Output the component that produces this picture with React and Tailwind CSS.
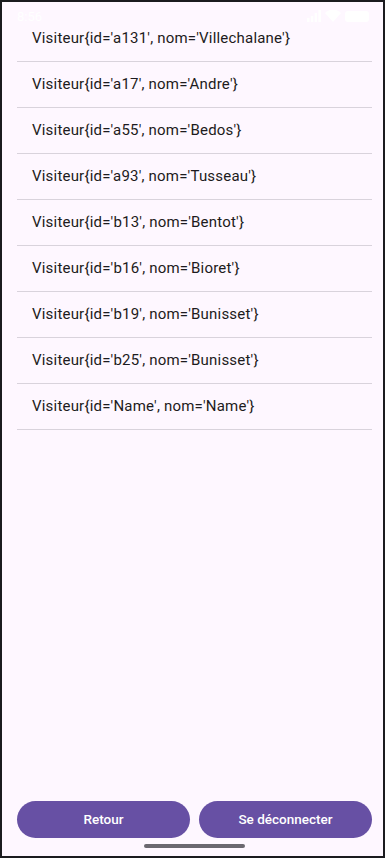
import React from "react";

const items = [
  ["a131", "Villechalane"],
  ["a17", "Andre"],
  ["a55", "Bedos"],
  ["a93", "Tusseau"],
  ["b13", "Bentot"],
  ["b16", "Bioret"],
  ["b19", "Bunisset"],
  ["b25", "Bunisset"],
  ["Name", "Name"],
];

export default function App() {
  return (
    <div
      className="w-[385px] h-[858px] bg-[#1b1b1f] pt-[2px] pb-[2px] pl-[2px] pr-[2px] overflow-hidden"
      style={{ fontFamily: "Roboto, 'Noto Sans', sans-serif" }}
    >
      <div className="relative w-full h-full bg-[#fef7ff] flex flex-col">
        {/* status bar */}
        <div className="absolute top-0 left-0 right-0 h-[28px] flex items-center justify-between pl-[15px] pr-[14px] text-white">
          <span className="text-[13px] leading-none">8:56</span>
          <div className="flex items-center gap-[4px]">
            <svg width="14" height="12" viewBox="0 0 14 12" fill="white">
              <rect x="0" y="8" width="2.5" height="4" />
              <rect x="3.8" y="6" width="2.5" height="6" />
              <rect x="7.6" y="3" width="2.5" height="9" />
              <rect x="11.4" y="0" width="2.5" height="12" />
            </svg>
            <svg width="16" height="12" viewBox="0 0 16 12" fill="white">
              <path d="M8 12 L0 3 A11 11 0 0 1 16 3 Z" />
            </svg>
            <div className="w-[24px] h-[11px] rounded-[3px] bg-white" />
          </div>
        </div>

        <div className="flex-1 pt-[14px] pl-[15px] pr-[11px]">
          {items.map(([id, nom]) => (
            <div
              key={id + nom}
              className="h-[46px] flex items-center pl-[15px] border-b border-[#d9d3dc] text-[15px] tracking-[0.2px] text-[#1d1b20]"
            >
              {`Visiteur{id='${id}', nom='${nom}'}`}
            </div>
          ))}
        </div>

        <div className="flex gap-[9px] pl-[15px] pr-[11px] pb-[18px]">
          <button className="flex-1 h-[37px] rounded-full bg-[#6750a4] text-white text-[13.5px] font-medium">
            Retour
          </button>
          <button className="flex-1 h-[37px] rounded-full bg-[#6750a4] text-white text-[13.5px] font-medium">
            Se déconnecter
          </button>
        </div>
        <div className="absolute bottom-[8px] left-[142px] w-[101px] h-[4px] rounded-full bg-[#6b6870]" />
      </div>
    </div>
  );
}
